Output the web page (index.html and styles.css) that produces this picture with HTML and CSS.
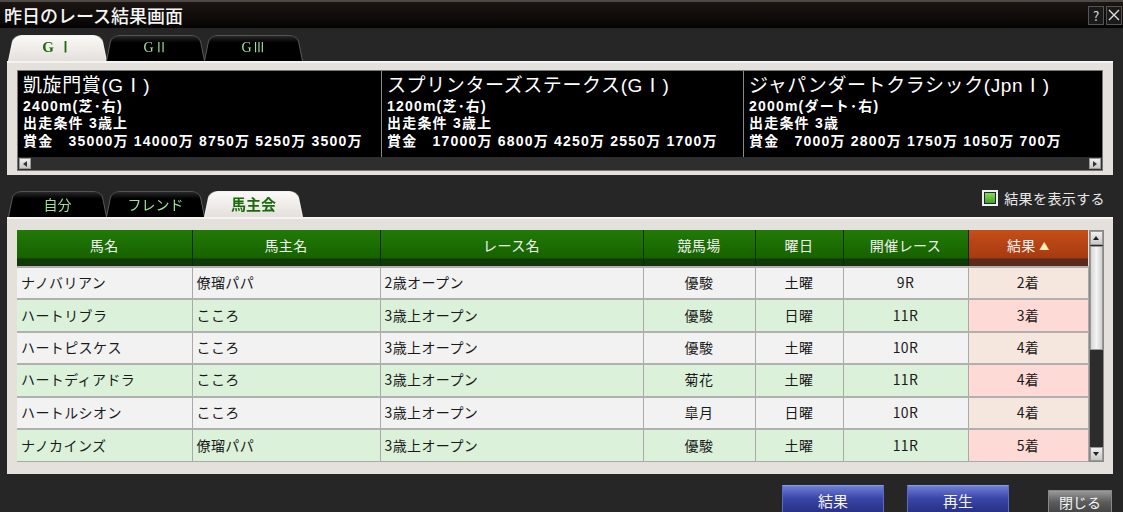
FILE: index.html
```html
<!DOCTYPE html>
<html lang="ja">
<head>
  <meta charset="UTF-8" />
  <title>昨日のレース結果画面</title>
  <link rel="stylesheet" href="styles.css">
</head>
<body>
  <div class="titlebar">
    <span class="title">昨日のレース結果画面</span>
    <div class="win-btns">
      <span class="wbtn">?</span>
      <span class="wbtn">
        <svg width="12" height="12" viewBox="0 0 12 12"><path d="M1 1L11 11M11 1L1 11" stroke="#ddd" stroke-width="1.4"/></svg>
      </span>
    </div>
  </div>

  <div class="wrap">
    <div class="tabs top">
      <span class="tab active grade">G Ⅰ</span>
      <span class="tab grade">GⅡ</span>
      <span class="tab grade">GⅢ</span>
    </div>
    <div class="panel upper">
      <div class="races">
        <div class="race">
          <div class="rname">凱旋門賞(GⅠ)</div>
          <div>2400m(芝･右)</div>
          <div>出走条件 3歳上</div>
          <div>賞金　35000万 14000万 8750万 5250万 3500万</div>
        </div>
        <div class="race">
          <div class="rname">スプリンターズステークス(GⅠ)</div>
          <div>1200m(芝･右)</div>
          <div>出走条件 3歳上</div>
          <div>賞金　17000万 6800万 4250万 2550万 1700万</div>
        </div>
        <div class="race">
          <div class="rname">ジャパンダートクラシック(JpnⅠ)</div>
          <div>2000m(ダート･右)</div>
          <div>出走条件 3歳</div>
          <div>賞金　7000万 2800万 1750万 1050万 700万</div>
        </div>
      </div>
      <div class="hscroll">
        <span class="arrow"><svg width="6" height="6" viewBox="0 0 6 6"><path d="M1 3L5 0V6Z" fill="#333"/></svg></span>
        <span class="arrow"><svg width="6" height="6" viewBox="0 0 6 6"><path d="M5 3L1 0V6Z" fill="#333"/></svg></span>
      </div>
    </div>

    <div class="tabrow">
      <div class="tabs">
        <span class="tab">自分</span>
        <span class="tab">フレンド</span>
        <span class="tab active">馬主会</span>
      </div>
      <label class="check"><span class="box"></span>結果を表示する</label>
    </div>

    <div class="panel lower">
      <div class="tablewrap">
        <table class="results">
          <thead>
            <tr>
              <th class="c1">馬名</th>
              <th class="c2">馬主名</th>
              <th class="c3">レース名</th>
              <th class="c4">競馬場</th>
              <th class="c5">曜日</th>
              <th class="c6">開催レース</th>
              <th class="c7 sorted">結果 <span class="tri">▲</span></th>
            </tr>
          </thead>
          <tbody>
            <tr><td>ナノバリアン</td><td>僚瑠パパ</td><td>2歳オープン</td><td class="ct">優駿</td><td class="ct">土曜</td><td class="ct">9R</td><td class="ct res">2着</td></tr>
            <tr><td>ハートリブラ</td><td>こころ</td><td>3歳上オープン</td><td class="ct">優駿</td><td class="ct">日曜</td><td class="ct">11R</td><td class="ct res">3着</td></tr>
            <tr><td>ハートピスケス</td><td>こころ</td><td>3歳上オープン</td><td class="ct">優駿</td><td class="ct">土曜</td><td class="ct">10R</td><td class="ct res">4着</td></tr>
            <tr><td>ハートディアドラ</td><td>こころ</td><td>3歳上オープン</td><td class="ct">菊花</td><td class="ct">土曜</td><td class="ct">11R</td><td class="ct res">4着</td></tr>
            <tr><td>ハートルシオン</td><td>こころ</td><td>3歳上オープン</td><td class="ct">皐月</td><td class="ct">日曜</td><td class="ct">10R</td><td class="ct res">4着</td></tr>
            <tr><td>ナノカインズ</td><td>僚瑠パパ</td><td>3歳上オープン</td><td class="ct">優駿</td><td class="ct">土曜</td><td class="ct">11R</td><td class="ct res">5着</td></tr>
          </tbody>
        </table>
        <div class="vscroll">
          <span class="arrow"><svg width="6" height="6" viewBox="0 0 6 6"><path d="M3 1L6 5H0Z" fill="#222"/></svg></span>
          <span class="thumb"></span>
          <span class="arrow bottom"><svg width="6" height="6" viewBox="0 0 6 6"><path d="M3 5L6 1H0Z" fill="#222"/></svg></span>
        </div>
      </div>
    </div>

    <div class="actions">
      <button class="btn blue">結果</button>
      <button class="btn blue">再生</button>
      <button class="btn gray">閉じる</button>
    </div>
  </div>
</body>
</html>
```

FILE: styles.css
```css
* { box-sizing: border-box; margin: 0; padding: 0; }
body {
  width: 1123px; height: 512px; overflow: hidden;
  background: #262626;
  font-family: "Noto Sans CJK JP", "DejaVu Sans", sans-serif;
  color: #111;
}

/* title bar */
.titlebar {
  height: 28px;
  border-top: 2px solid #4e4a48;
  background: linear-gradient(#1c1512, #050404);
  display: flex; align-items: center; justify-content: space-between;
  padding: 0 1px 0 4px;
}
.title { color: #f4f4f4; font-size: 18px; font-weight: 500; }
.win-btns { display: flex; gap: 2px; }
.wbtn {
  width: 16px; height: 19px;
  border: 1px solid #555; background: #1a1a1a;
  color: #ddd; font-size: 13px; line-height: 17px; text-align: center;
  display: flex; align-items: center; justify-content: center;
}

.wrap { padding: 0 10px 0 7px; }

/* tabs */
.tabs { display: flex; height: 30px; padding-left: 1px; }
.tabs.top { margin-top: 3px; }
.tab {
  position: relative; z-index: 0;
  width: 99px; margin-right: -1px;
  font-size: 14px; color: #9fe39a;
  display: flex; align-items: center; justify-content: center;
  padding-top: 3px;
}
.tab::before {
  content: ""; position: absolute; inset: 0; z-index: -1;
  background: linear-gradient(#2a2a2a, #000 30%);
  border: 1px solid #5a5a5a; border-bottom: none;
  border-radius: 9px 9px 0 0;
  transform: perspective(60px) rotateX(14deg);
  transform-origin: bottom;
}
.tab.active { color: #1b6a0c; font-weight: 700; font-size: 15px; }
.tab.active::before {
  background: linear-gradient(#fbfaf8, #e4e0dc);
  border-color: #f4f2f0;
}
.grade { font-family: "Liberation Serif", serif; font-size: 14px; }
.tab.active.grade { font-weight: 700; font-size: 15px; }

.panel {
  background: #e4e0dc;
  border-top: 2px solid #f6f4f2;
}

/* upper race info */
.upper { padding: 7px 10px 4px 10px; }
.races {
  background: #000; color: #fff;
  display: grid; grid-template-columns: 363px 362px 1fr;
  height: 87px; border: 1px solid #777; border-bottom: none;
}
.race {
  padding: 3px 0 0 5px;
  font-family: "Liberation Sans", "Noto Sans CJK JP", sans-serif;
  font-size: 14px; font-weight: 700; line-height: 17.3px; letter-spacing: 1.2px;
  white-space: nowrap; overflow: hidden;
}
.race + .race { border-left: 1px solid #8a8a8a; }
.race .rname { font-size: 19px; font-weight: 400; line-height: 24px; letter-spacing: .6px; }
.hscroll {
  height: 14px; background: #2e2e2e;
  border: 1px solid #777; border-top: none;
  display: flex; justify-content: space-between; align-items: center;
  padding: 0 1px;
}
.arrow {
  width: 12px; height: 11px;
  background: linear-gradient(#f0f0f0, #c8c8c8);
  border: 1px solid #999;
  display: flex; align-items: center; justify-content: center;
}

/* lower tabs row */
.tabrow {
  margin-top: 12px;
  display: flex; justify-content: space-between; align-items: flex-start;
}
.check {
  display: flex; align-items: center; gap: 6px;
  color: #e8e8e8; font-size: 14px; letter-spacing: .4px;
  margin-top: 1px; margin-right: 8px;
}
.box {
  width: 16px; height: 16px; border: 2px solid #f0f0f0;
  background: linear-gradient(#8ce05a, #3c9c1e);
  box-shadow: inset 0 0 0 1px #224;
}

.lower { padding: 11px 10px 12px 10px; }
.tablewrap { display: flex; }

/* table */
.results {
  border-collapse: collapse; table-layout: fixed;
  width: 1071px; font-size: 14px; letter-spacing: .4px;
}
.results th {
  height: 37px; color: #f2f2f2; font-weight: 400;
  background: linear-gradient(#217a06, #166200 78%, #10380a 80%, #10380a);
  border-left: 1px solid #0a2a04;
  padding-bottom: 6px;
}
.results th:first-child { border-left: none; }
.results th.sorted {
  background: linear-gradient(#c54e18, #a63a10 78%, #5c2a1c 80%, #5c2a1c);
}
.tri { color: #f4eebb; font-size: 10px; position: relative; top: -1px; }
.c1 { width: 175px; } .c2 { width: 188px; } .c3 { width: 263px; }
.c4 { width: 112px; } .c5 { width: 88px; } .c6 { width: 125px; } .c7 { width: 120px; }

.results td {
  height: 32px; padding: 0 4px 2px;
  border: 1px solid #a9a9a9; border-top: 2px solid #b0b0b0;
  background: #f2f2f2; color: #1a1a1a;
  white-space: nowrap;
}
.results tr:nth-child(even) td { background: #dbf1da; }
.results td.res { background: #f6e7de; }
.results tr:nth-child(even) td.res { background: #fddad5; }
.results td:first-child { border-left: none; }
.ct { text-align: center; }

.vscroll {
  width: 15px; background: #2c2c2c;
  border: 1px solid #888;
  display: flex; flex-direction: column; height: 232px;
}
.vscroll .arrow { width: 13px; height: 14px; }
.vscroll .thumb {
  height: 104px; margin: 1px 0;
  background: linear-gradient(90deg, #d6d6d6, #f4f4f4 50%, #cfcfcf);
  border: 1px solid #999;
}
.vscroll .bottom { margin-top: auto; }

/* bottom buttons */
.actions {
  display: flex; justify-content: flex-end; align-items: flex-start;
  margin-top: 11px; padding-right: 1px;
}
.btn {
  font-family: inherit; font-size: 15px; color: #f4f4f4;
  border: 1px solid #5b6cc8;
}
.btn.blue {
  width: 102px; height: 30px; margin-right: 23px;
  background: linear-gradient(#6d7fd6, #3a45a8 45%, #262e80);
  border-top-color: #8a9ae6;
}
.btn.blue + .btn.blue { margin-right: 39px; }
.btn.gray {
  width: 64px; height: 24px; margin-top: 5px;
  background: linear-gradient(#9a9a9a, #5c5c5c 50%, #444);
  border-color: #888; font-size: 14px;
}
```
